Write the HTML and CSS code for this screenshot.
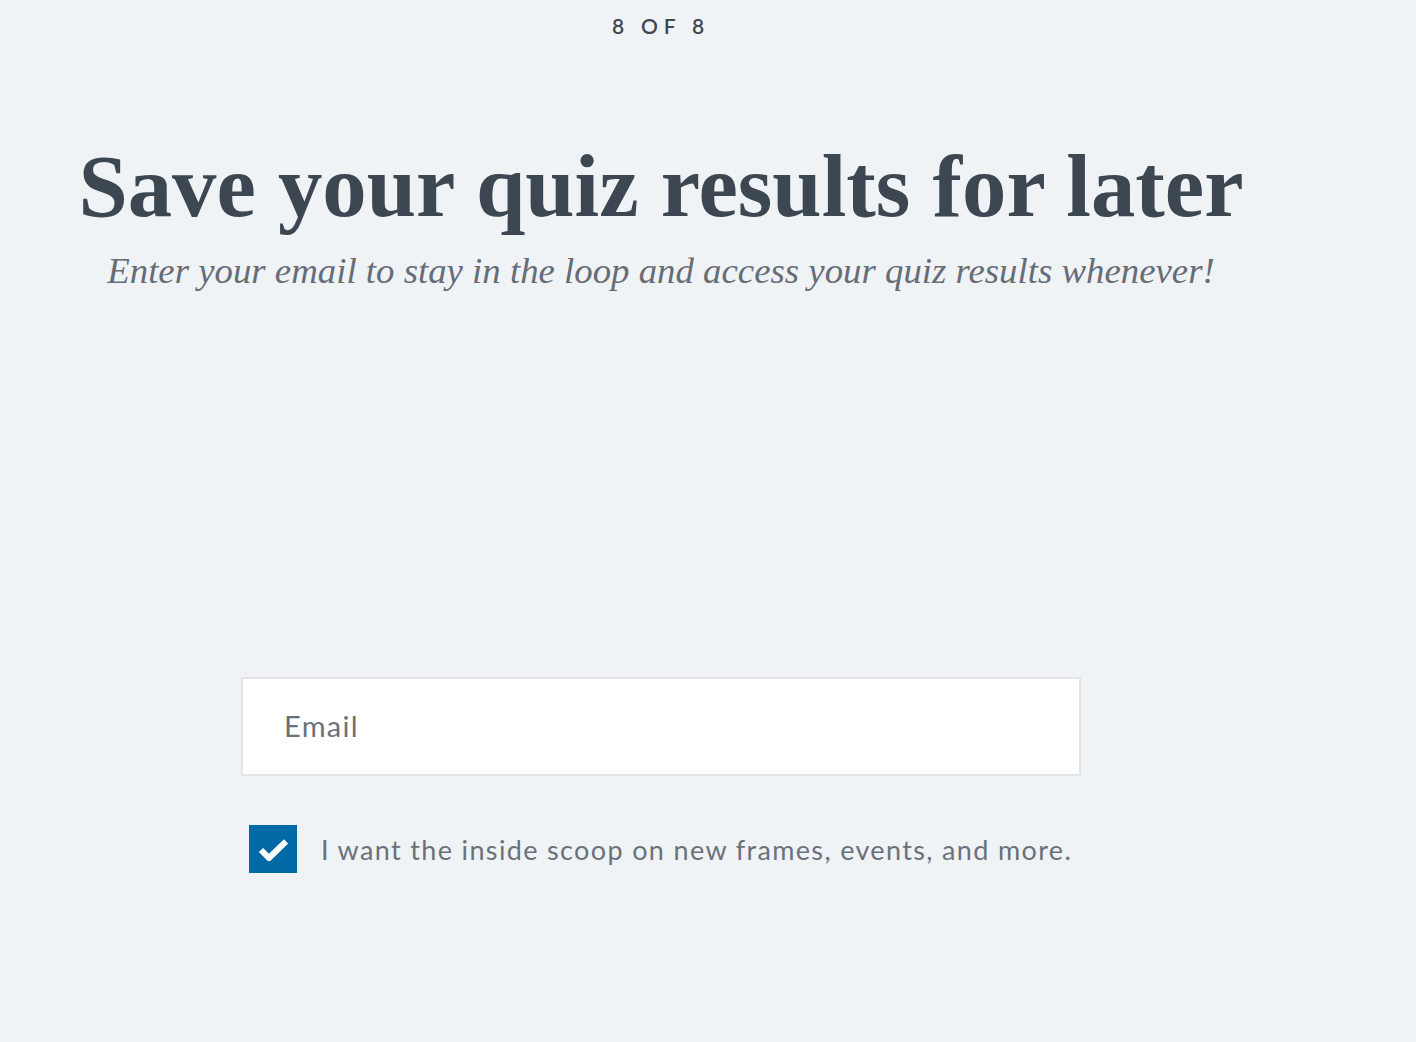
FILE: index.html
```html
<!DOCTYPE html>
<html>
<head>
<meta charset="utf-8">
<link rel="stylesheet" href="styles.css">
</head>
<body>
<main class="page">
  <div class="step">8 OF 8</div>
  <h1 class="title">Save your quiz results for later</h1>
  <p class="subtitle">Enter your email to stay in the loop and access your quiz results whenever!</p>
  <form class="form">
    <div class="field"><span class="placeholder">Email</span></div>
    <label class="optin">
      <span class="box">
        <svg width="30" height="24" viewBox="0 0 30 24"><path d="M3 13 L11 21 L28 4.5" fill="none" stroke="#fff" stroke-width="6" stroke-linecap="butt" stroke-linejoin="miter"/></svg>
      </span>
      <span class="optin-text">I want the inside scoop on new frames, events, and more.</span>
    </label>
  </form>
</main>
</body>
</html>
```
FILE: styles.css
```css
html, body {
  margin: 0;
  padding: 0;
  background: #eff3f6;
}
.page {
  width: 1322px;
  display: flex;
  flex-direction: column;
  align-items: center;
}
.step {
  margin-top: 13px;
  font-family: "Lato", "Liberation Sans", sans-serif;
  font-size: 21px;
  font-weight: 600;
  letter-spacing: 5.8px;
  color: #3f4852;
  line-height: 26px;
}
.title {
  margin: 97px 0 0 0;
  font-family: "Liberation Serif", serif;
  font-weight: 700;
  font-size: 88.7px;
  line-height: 100px;
  color: #3d4752;
}
.subtitle {
  margin: 15px 0 0 0;
  font-family: "Liberation Serif", serif;
  font-style: italic;
  font-size: 36.8px;
  line-height: 40px;
  color: #666d77;
}
.form {
  margin-top: 386px;
  width: 840px;
  display: flex;
  flex-direction: column;
}
.field {
  height: 95px;
  background: #fff;
  border: 2px solid #e1e5e8;
  display: flex;
  align-items: center;
  padding-left: 41px;
}
.placeholder {
  font-family: "Lato", "Liberation Sans", sans-serif;
  font-size: 29px;
  letter-spacing: 1.3px;
  color: #6b717a;
  margin-top: -2px;
}
.optin {
  margin-top: 49px;
  margin-left: 8px;
  display: flex;
  align-items: center;
  gap: 24px;
}
.box {
  width: 48px;
  height: 48px;
  background: #0069a6;
  display: flex;
  align-items: center;
  justify-content: center;
}
.optin-text {
  font-family: "Lato", "Liberation Sans", sans-serif;
  font-size: 27px;
  letter-spacing: 1.35px;
  color: #6b717a;
}
```
